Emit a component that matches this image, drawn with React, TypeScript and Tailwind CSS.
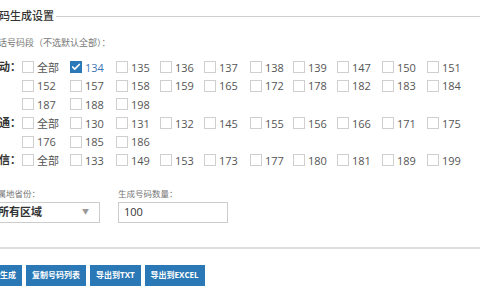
import { Check } from "lucide-react"

const cols = "grid-cols-[48px_46px_44px_44px_46px_43px_44px_45px_45px_45px]"

type Group = { label: string; items: string[] }

const groups: Group[] = [
  {
    label: "移动：",
    items: ["全部", "134", "135", "136", "137", "138", "139", "147", "150", "151", "152", "157", "158", "159", "165", "172", "178", "182", "183", "184", "187", "188", "198"],
  },
  {
    label: "联通：",
    items: ["全部", "130", "131", "132", "145", "155", "156", "166", "171", "175", "176", "185", "186"],
  },
  {
    label: "电信：",
    items: ["全部", "133", "149", "153", "173", "177", "180", "181", "189", "199"],
  },
]

const checked = ["134"]

const CheckItem = ({ text }: { text: string }) => {
  const on = checked.includes(text)
  return (
    <label className="flex h-[18.6px] items-center">
      {on ? (
        <span className="flex h-[12px] w-[12px] items-center justify-center bg-[#2a79b8]">
          <Check size={10} strokeWidth={4} className="text-white" />
        </span>
      ) : (
        <span className="h-[12px] w-[12px] border border-[#cfcfcf] bg-white" />
      )}
      <span className={`ml-[3px] text-[11px] leading-none ${on ? "text-[#3b78b5]" : "text-[#555]"}`}>{text}</span>
    </label>
  )
}

const App = () => {
  return (
    <div className="h-[300px] w-[480px] overflow-hidden bg-white font-['Open_Sans','Noto_Sans_CJK_SC',sans-serif]">
      <div className="-ml-[40px] w-[520px]">
        {/* legend */}
        <div className="flex h-[32px] items-center">
          <span className="pl-[28px] text-[11px] font-medium text-[#333]">号码生成设置</span>
          <div className="ml-[2px] h-px flex-1 bg-[#cfcfcf]" />
        </div>

        <div className="pl-[29px] text-[9px] leading-[22px] text-[#777]">电话号码段（不选默认全部）：</div>

        <div className="mt-[4px]">
          {groups.map((g) => (
            <div key={g.label} className="flex">
              <div className="flex h-[18.6px] w-[62px] shrink-0 items-center justify-end pr-[1px] text-[11px] font-bold text-[#333]">
                {g.label}
              </div>
              <div className={`grid ${cols}`}>
                {g.items.map((it) => (
                  <CheckItem key={it} text={it} />
                ))}
              </div>
            </div>
          ))}
        </div>

        {/* province + count */}
        <div className="mt-[17px] flex pl-[29px]">
          <div className="w-[111px]">
            <div className="text-[8.5px] leading-[14px] text-[#777]">归属地省份：</div>
            <div className="mt-[1px] flex h-[21px] items-center justify-between border border-[#ccc] pl-[8px] pr-[10px]">
              <span className="text-[11px] font-semibold text-[#333]">所有区域</span>
              <span className="text-[7px] text-[#999]">▼</span>
            </div>
          </div>
          <div className="ml-[18px] w-[110px]">
            <div className="text-[8.5px] leading-[14px] text-[#777]">生成号码数量：</div>
            <div className="mt-[1px] flex h-[21px] items-center border border-[#ccc] pl-[5px]">
              <span className="text-[11px] text-[#333]">100</span>
            </div>
          </div>
        </div>

        <div className="mt-[24px] h-[2px] w-full bg-[#dedede]" />

        <div className="mt-[16px] flex gap-[4px] pl-[18px]">
          {["立即生成", "复制号码列表", "导出到TXT", "导出到EXCEL"].map((b) => (
            <button key={b} className="h-[21px] bg-[#2a79b6] px-[6px] text-[8px] font-bold text-white">
              {b}
            </button>
          ))}
        </div>
      </div>
    </div>
  )
}

export default App
